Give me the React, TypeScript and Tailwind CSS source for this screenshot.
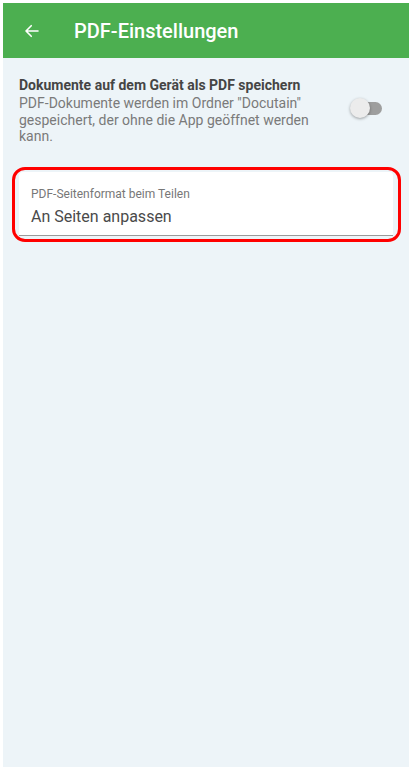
import React from "react";

export default function App() {
  return (
    <div className="w-[413px] h-[772px] bg-white pt-[3px] pl-[3px]" style={{ fontFamily: "Roboto, 'Liberation Sans', sans-serif" }}>
      <div className="w-[406px] h-[764px] bg-[#edf4f8] flex flex-col">
        <div className="h-[55px] bg-[#4caf50] flex items-center shrink-0">
          <svg width="18" height="18" viewBox="0 0 24 24" className="ml-[20px]" fill="none" stroke="white" strokeWidth="2.2" strokeLinecap="round" strokeLinejoin="round">
            <path d="M20 12H4M11 5l-7 7 7 7" />
          </svg>
          <div className="ml-[33px] text-white text-[20px] font-medium leading-none">PDF-Einstellungen</div>
        </div>
        <div className="flex items-start pl-[16px] pr-[27px] pt-[18px]">
          <div className="flex-1">
            <div className="text-[14px] font-bold text-[#454545] leading-[18px]">Dokumente auf dem Gerät als PDF speichern</div>
            <div className="text-[14px] text-[#7a7a7a] leading-[16.5px] mt-[1px] w-[300px]">
              PDF-Dokumente werden im Ordner "Docutain" gespeichert, der ohne die App geöffnet werden kann.
            </div>
          </div>
          <div className="relative w-[32px] h-[21px] mt-[22px] shrink-0">
            <div className="absolute left-[6px] top-[4px] w-[26px] h-[13px] rounded-full bg-[#9e9e9e]" />
            <div className="absolute left-0 top-0 w-[20px] h-[20px] rounded-full bg-[#ececec] shadow-[0_1px_3px_rgba(0,0,0,0.35)]" />
          </div>
        </div>
        <div className="relative mx-[16px] mt-[27px]">
          <div className="bg-white rounded-t-[4px] border-b border-[#9a9a9a] h-[64px] px-[12px] pt-[15px]">
            <div className="text-[12px] text-[#777] leading-[14px]">PDF-Seitenformat beim Teilen</div>
            <div className="text-[16px] text-[#4a4a4a] leading-[20px] mt-[6px]">An Seiten anpassen</div>
          </div>
          <div className="absolute -left-[7px] -right-[8px] -top-[5px] -bottom-[6px] border-[3px] border-[#ff0000] rounded-[13px] pointer-events-none" />
        </div>
      </div>
    </div>
  );
}
